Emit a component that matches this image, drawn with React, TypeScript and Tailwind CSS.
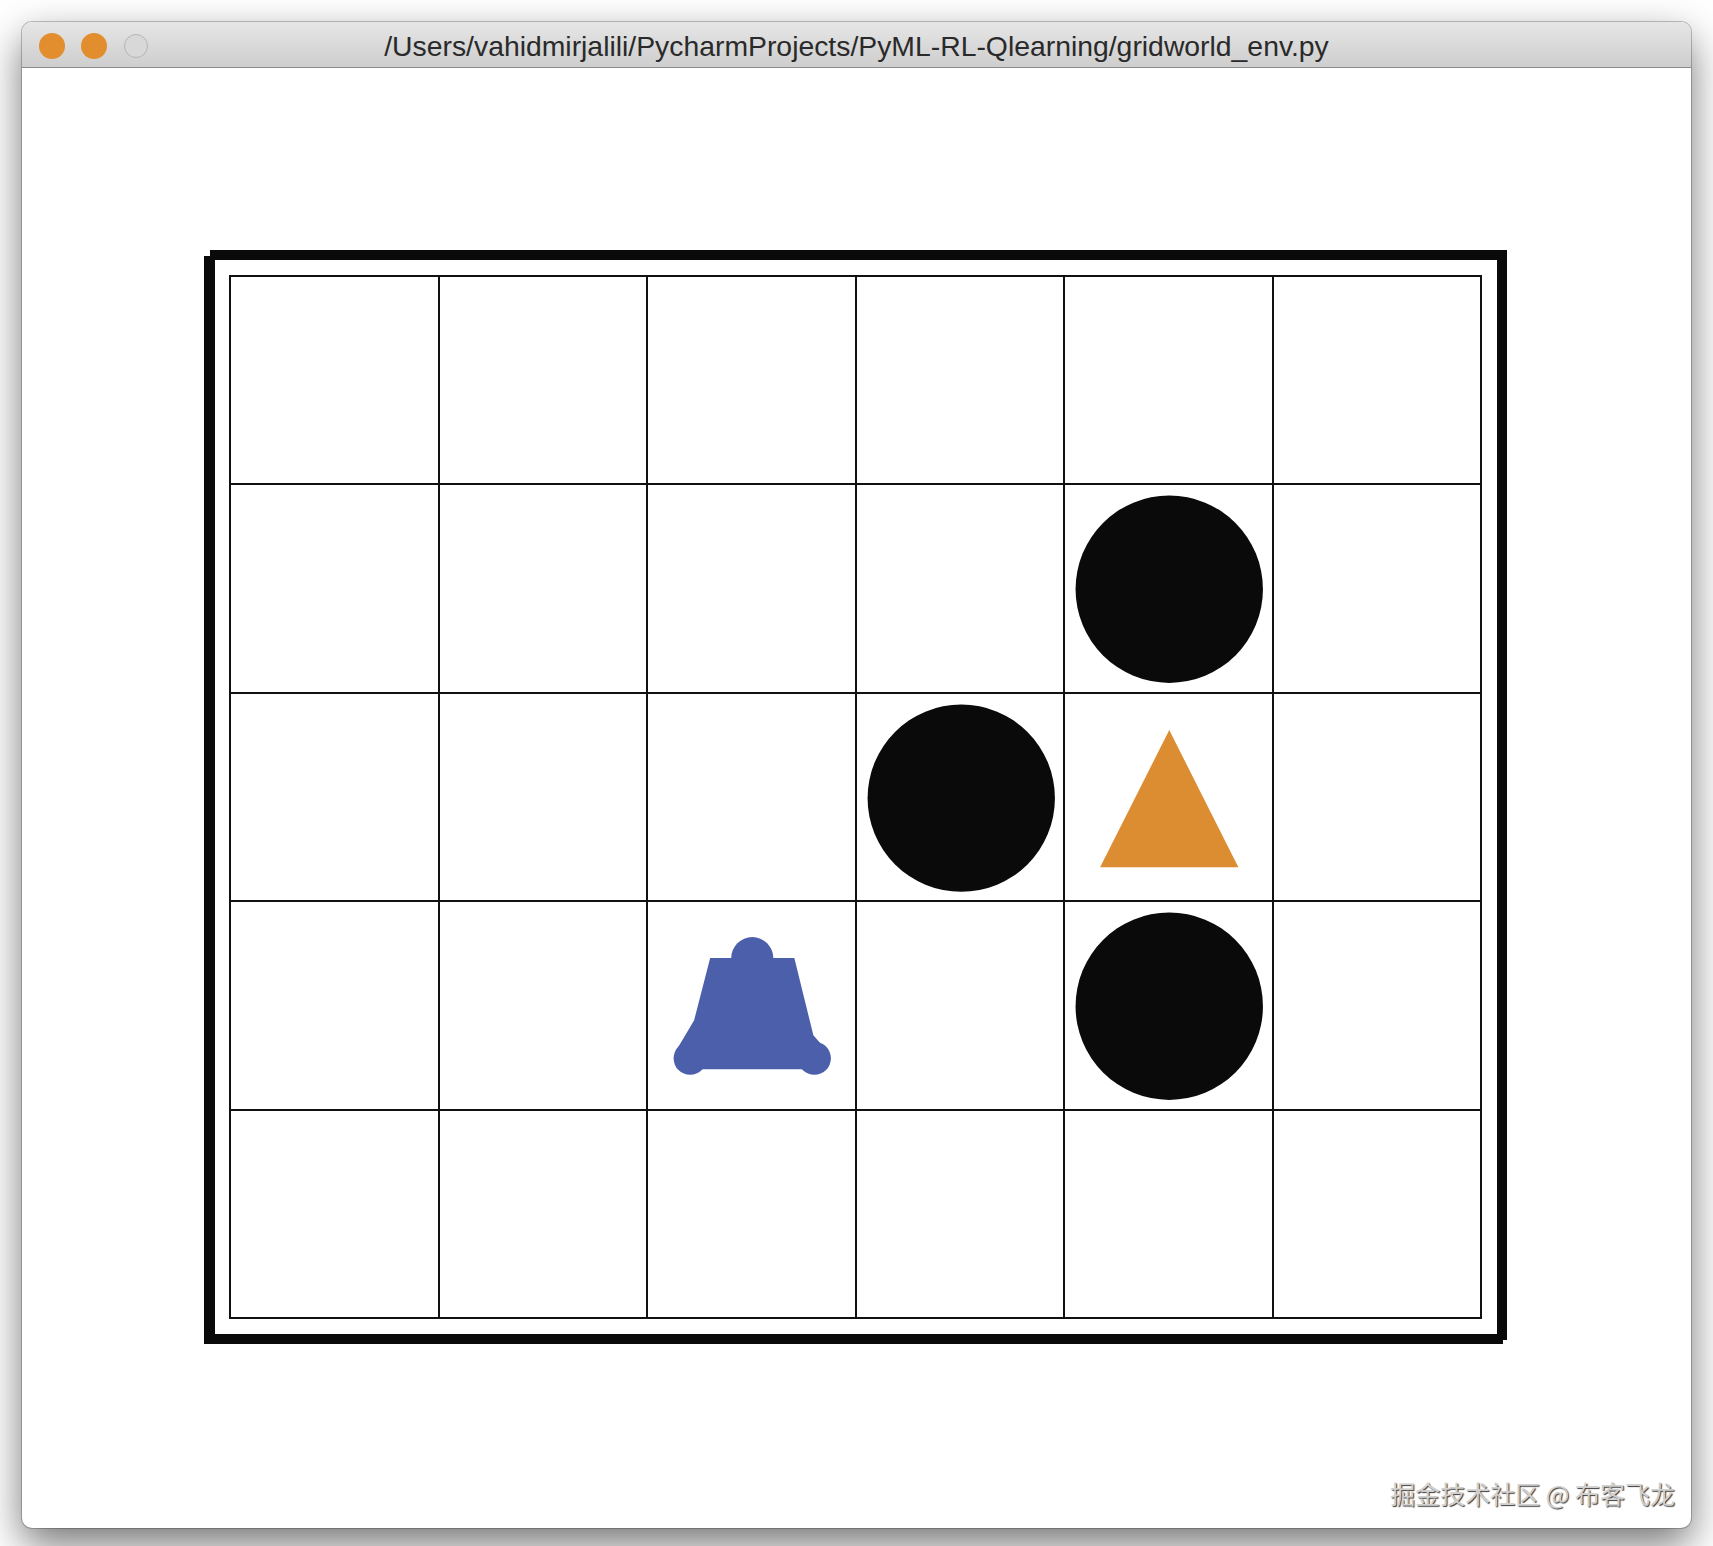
const ROWS = 5;
const COLS = 6;

function Circle() {
  return (
    <svg viewBox="0 0 206 206" className="block h-full w-full">
      <circle cx="104" cy="104" r="93.5" fill="#0a0a0a" />
    </svg>
  );
}

function Triangle() {
  return (
    <svg viewBox="0 0 206 206" className="block h-full w-full">
      <polygon points="104,36 35,173 173,173" fill="#dc8d32" />
    </svg>
  );
}

function Agent() {
  return (
    <svg viewBox="0 0 206 206" className="block h-full w-full">
      <g fill="#4c5fab">
        <circle cx="104" cy="56" r="21" />
        <circle cx="42" cy="156" r="16.5" />
        <circle cx="166" cy="156" r="16.5" />
        <polygon points="62,56 146,56 165,133 172,141 166,167 42,167 30,145 46,118" />
      </g>
    </svg>
  );
}

const shapes: Record<string, React.ReactNode> = {
  '1-4': <Circle />,
  '2-3': <Circle />,
  '2-4': <Triangle />,
  '3-2': <Agent />,
  '3-4': <Circle />,
};

export default function App() {
  const cells = [];
  for (let r = 0; r < ROWS; r++) {
    for (let c = 0; c < COLS; c++) {
      cells.push(
        <div key={`${r}-${c}`} className="border-r-2 border-b-2 border-[#111]">
          {shapes[`${r}-${c}`]}
        </div>
      );
    }
  }

  return (
    <div className="h-[1546px] w-[1713px] overflow-hidden bg-white pt-[22px] pl-[22px]">
      <div className="relative flex h-[1506px] w-[1669px] flex-col overflow-hidden rounded-[10px] bg-white shadow-[0_0_0_1px_rgba(0,0,0,0.22),0_16px_40px_rgba(0,0,0,0.55)]">
        {/* Title bar */}
        <div className="relative flex h-[46px] shrink-0 items-center justify-center border-b border-[#8a8a8a] bg-gradient-to-b from-[#e6e6e6] to-[#cecece]">
          <div className="absolute left-[17px] top-[11px] flex items-center gap-[16px]">
            <span className="size-[26px] rounded-full bg-[#e38e2e]" />
            <span className="size-[26px] rounded-full bg-[#e38e2e]" />
            <span className="ml-[1px] size-[24px] rounded-full border border-[#b4b4b4] bg-[#d8d8d8]" />
          </div>
          <span className="pt-[4px] font-['Liberation_Sans',sans-serif] text-[28.35px] leading-none text-[#2a2a2a]">
            /Users/vahidmirjalili/PycharmProjects/PyML-RL-Qlearning/gridworld_env.py
          </span>
        </div>

        {/* Board */}
        <div className="pt-[182px] pl-[182px]">
          <div className="relative flex h-[1094px] w-[1303px] items-center justify-start border-[10px] border-l-[11px] border-[#0a0a0a] bg-white pl-[14px]">
            <span className="absolute -left-[11px] -top-[10px] size-[6px] bg-white" />
            <span className="absolute -right-[10px] -bottom-[10px] size-[4px] bg-white" />
            <div className="grid h-[1044px] w-[1253px] grid-cols-6 grid-rows-5 border-t-2 border-l-2 border-[#111]">
              {cells}
            </div>
          </div>
        </div>

        {/* Watermark */}
        <span className="absolute right-[16px] bottom-[22px] font-['Noto_Sans_CJK_SC',sans-serif] text-[25px] leading-none text-[#d0d0d0] [text-shadow:1px_1px_1px_#3a3a3a]">
          掘金技术社区 @ 布客飞龙
        </span>
      </div>
    </div>
  );
}
